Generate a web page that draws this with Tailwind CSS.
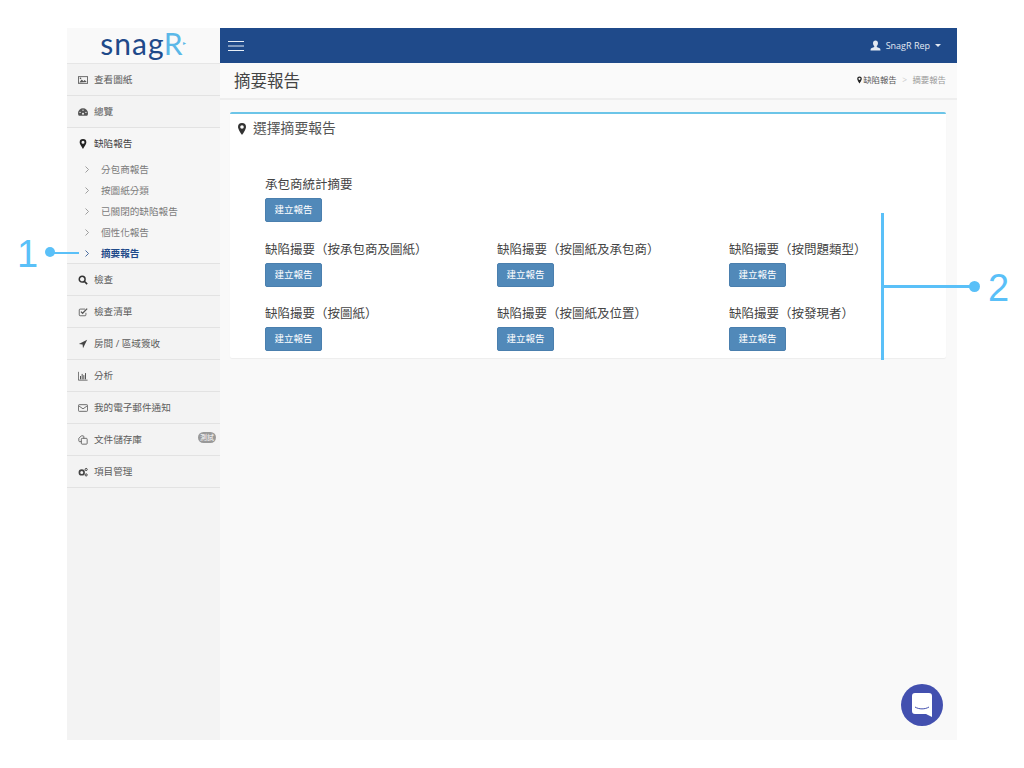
<!DOCTYPE html>
<html lang="zh-Hant">
<head>
  <meta charset="utf-8">
  <title>摘要報告</title>
  <script src="https://cdn.jsdelivr.net/npm/@tailwindcss/browser@4"></script>
</head>
<body class="bg-white h-[768px] overflow-hidden relative font-['Open_Sans','Noto_Sans_CJK_TC',sans-serif]">
  <div class="absolute left-[67px] top-[28px] w-[890px] h-[712px] flex bg-[#f9f9f9]">
    <!-- sidebar -->
    <aside class="w-[153px] shrink-0 bg-[#f3f3f3] text-[9.600px] leading-[16px] text-[#5c5c5c]">
      <div class="h-[36px] bg-[#f9f9f9] border-b border-[#e6e6e6] flex items-center justify-center">
        <span class="font-['Lato',sans-serif] text-[30px] leading-none tracking-[1.100px] text-[#1f4a8a] -mt-[6px] flex items-start">snag<span class="text-[#5bb8e8] -ml-[1px]">R</span><span class="text-[#5bb8e8] text-[6px] -ml-[1px] mt-[12px]">▸</span></span>
      </div>
      <a class="h-[32px] border-b border-[#e2e2e2] flex items-center pl-[11px] gap-[6px]">
        <svg class="w-[10px] h-[10px]" viewBox="0 0 12 12"><path fill="#555" d="M0 1.500h12v9H0z"/><path fill="#f3f3f3" d="M1 2.500h10v7H1z"/><path fill="#555" d="M1.500 9l3-3.500 2 2 1.500-1.500 2.500 2.500z"/><circle cx="3" cy="4" r="1" fill="#555"/></svg>
        <span>查看圖紙</span>
      </a>
      <a class="h-[32px] border-b border-[#e2e2e2] flex items-center pl-[11px] gap-[6px]">
        <svg class="w-[10px] h-[10px]" viewBox="0 0 12 12"><path fill="#555" d="M6 1.500a6 6 0 0 0-6 6c0 1.300.4 2.400 1 3h10c.6-.6 1-1.700 1-3a6 6 0 0 0-6-6z"/><circle cx="6" cy="8" r="1.200" fill="#f3f3f3"/><circle cx="2.500" cy="6.500" r=".8" fill="#f3f3f3"/><circle cx="9.500" cy="6.500" r=".8" fill="#f3f3f3"/><circle cx="6" cy="3.800" r=".8" fill="#f3f3f3"/></svg>
        <span>總覽</span>
      </a>
      <div class="h-[136px] border-b border-[#e2e2e2] bg-[#f6f6f6]">
        <a class="h-[32px] flex items-center pl-[11px] gap-[6px] text-[#444]">
          <svg class="w-[10px] h-[10px]" viewBox="0 0 12 12"><path fill="#222" fill-rule="evenodd" d="M6 0a4 4 0 0 0-4 4c0 2.500 4 8 4 8s4-5.500 4-8a4 4 0 0 0-4-4zm0 2.200a1.800 1.800 0 1 1 0 3.600 1.800 1.800 0 0 1 0-3.600z"/></svg>
          <span>缺陷報告</span>
        </a>
        <ul class="text-[#7c7c7c] -mt-[1px]">
          <li class="h-[21px] flex items-center pl-[18px] gap-[12px]"><svg class="w-[4px] h-[7px]" viewBox="0 0 4 7"><path d="M.5.5l3 3-3 3" fill="none" stroke="#888" stroke-width=".8"/></svg>分包商報告</li>
          <li class="h-[21px] flex items-center pl-[18px] gap-[12px]"><svg class="w-[4px] h-[7px]" viewBox="0 0 4 7"><path d="M.5.5l3 3-3 3" fill="none" stroke="#888" stroke-width=".8"/></svg>按圖紙分類</li>
          <li class="h-[21px] flex items-center pl-[18px] gap-[12px]"><svg class="w-[4px] h-[7px]" viewBox="0 0 4 7"><path d="M.5.5l3 3-3 3" fill="none" stroke="#888" stroke-width=".8"/></svg>已關閉的缺陷報告</li>
          <li class="h-[21px] flex items-center pl-[18px] gap-[12px]"><svg class="w-[4px] h-[7px]" viewBox="0 0 4 7"><path d="M.5.5l3 3-3 3" fill="none" stroke="#888" stroke-width=".8"/></svg>個性化報告</li>
          <li class="h-[21px] flex items-center pl-[18px] gap-[12px] text-[#1f4a8a] font-bold"><svg class="w-[4px] h-[7px]" viewBox="0 0 4 7"><path d="M.5.5l3 3-3 3" fill="none" stroke="#1f4a8a" stroke-width=".8"/></svg>摘要報告</li>
        </ul>
      </div>
      <a class="h-[32px] border-b border-[#e2e2e2] flex items-center pl-[11px] gap-[6px]">
        <svg class="w-[10px] h-[10px]" viewBox="0 0 12 12"><circle cx="5" cy="5" r="3.500" fill="none" stroke="#333" stroke-width="1.800"/><path d="M7.500 7.500l3.500 3.500" stroke="#333" stroke-width="2"/></svg>
        <span>檢查</span>
      </a>
      <a class="h-[32px] border-b border-[#e2e2e2] flex items-center pl-[11px] gap-[6px]">
        <svg class="w-[10px] h-[10px]" viewBox="0 0 12 12"><path d="M9.500 7v2.500a1 1 0 0 1-1 1h-6a1 1 0 0 1-1-1v-6a1 1 0 0 1 1-1h6" fill="none" stroke="#555"/><path d="M3.500 5.500l2 2 5.500-5.500" fill="none" stroke="#555" stroke-width="1.500"/></svg>
        <span>檢查清單</span>
      </a>
      <a class="h-[32px] border-b border-[#e2e2e2] flex items-center pl-[11px] gap-[6px]">
        <svg class="w-[10px] h-[10px]" viewBox="0 0 12 12"><path fill="#444" d="M11 1L1 6l4.500.5L6 11z"/></svg>
        <span>房間 / 區域簽收</span>
      </a>
      <a class="h-[32px] border-b border-[#e2e2e2] flex items-center pl-[11px] gap-[6px]">
        <svg class="w-[10px] h-[10px]" viewBox="0 0 12 12"><path d="M.5 1v10h11" fill="none" stroke="#555"/><path d="M3 10V6M5 10V3.500M7 10V5M9 10V2.500" stroke="#555" stroke-width="1.200"/></svg>
        <span>分析</span>
      </a>
      <a class="h-[32px] border-b border-[#e2e2e2] flex items-center pl-[11px] gap-[6px]">
        <svg class="w-[10px] h-[10px]" viewBox="0 0 12 12"><rect x=".5" y="2" width="11" height="8" rx="1" fill="none" stroke="#555"/><path d="M1 3.500l5 3.500 5-3.500" fill="none" stroke="#555"/></svg>
        <span>我的電子郵件通知</span>
      </a>
      <a class="relative h-[32px] border-b border-[#e2e2e2] flex items-center pl-[11px] gap-[6px]">
        <svg class="w-[10px] h-[10px]" viewBox="0 0 12 12"><rect x="4" y="4" width="7" height="7" rx="1" fill="none" stroke="#555"/><path d="M4 8H2a1 1 0 0 1-1-1V4l3-3h2a1 1 0 0 1 1 1v2" fill="none" stroke="#555"/></svg>
        <span>文件儲存庫</span>
        <span class="absolute right-[4px] top-[8px] h-[11px] w-[18px] rounded-full bg-[#999] text-white text-[7px] leading-[11px] text-center">測試</span>
      </a>
      <a class="h-[32px] border-b border-[#e2e2e2] flex items-center pl-[11px] gap-[6px]">
        <svg class="w-[10px] h-[10px]" viewBox="0 0 12 12"><circle cx="4.500" cy="6.500" r="2.800" fill="none" stroke="#444" stroke-width="2"/><circle cx="9.800" cy="3" r="1.300" fill="none" stroke="#444" stroke-width="1.200"/><circle cx="9.800" cy="9.500" r="1.300" fill="none" stroke="#444" stroke-width="1.200"/></svg>
        <span>項目管理</span>
      </a>
    </aside>

    <!-- main -->
    <div class="flex-1 flex flex-col min-w-0">
      <header class="h-[35px] shrink-0 bg-[#1f4a8a] flex items-center justify-between pl-[8px] pr-[16px]">
        <svg class="w-[16px] h-[12px]" viewBox="0 0 16 12"><path d="M0 1.500h16M0 6h16M0 10.500h16" stroke="#e8eef6" stroke-width="1.200"/></svg>
        <div class="flex items-center text-[9px] text-[#e3e9f2]">
          <svg class="w-[11px] h-[11px] mr-[5px]" viewBox="0 0 12 12"><path fill="#e3e9f2" d="M6 .5c1.700 0 2.700 1.200 2.700 3 0 1.300-.6 2.500-1.300 3.100v1c1.500.6 4 1 4 2.900v1H.6v-1c0-1.900 2.500-2.300 4-2.900v-1C3.900 6 3.300 4.800 3.300 3.500c0-1.800 1-3 2.700-3z"/></svg>
          <span>SnagR Rep</span>
          <span class="ml-[5px] w-0 h-0 border-x-[3px] border-x-transparent border-t-[3px] border-t-[#e3e9f2]"></span>
        </div>
      </header>
      <div class="h-[37px] shrink-0 bg-[#fafafa] border-b-2 border-[#eeeeee] flex items-center justify-between pl-[14px] pr-[11px]">
        <h1 class="text-[16.500px] text-[#444] font-normal mt-[2px]">摘要報告</h1>
        <div class="flex items-center text-[8.400px] text-[#555]">
          <svg class="w-[7px] h-[8px]" viewBox="0 0 12 12"><path fill="#222" fill-rule="evenodd" d="M6 0a4 4 0 0 0-4 4c0 2.500 4 8 4 8s4-5.500 4-8a4 4 0 0 0-4-4zm0 2.200a1.800 1.800 0 1 1 0 3.600 1.800 1.800 0 0 1 0-3.600z"/></svg>
          <span>缺陷報告</span>
          <span class="mx-[5.500px] text-[#ccc]">&gt;</span>
          <span class="text-[#999]">摘要報告</span>
        </div>
      </div>
      <section class="mt-[12px] ml-[10px] w-[716px] h-[246px] bg-white rounded-[2px] border-t-2 border-[#6cc5e8] shadow-[0_1px_1px_rgba(0,0,0,0.05)] text-[#444]">
        <div class="flex items-center h-[29px] pl-[7px] gap-[6px] text-[13.800px] text-[#555]">
          <svg class="w-[10px] h-[12px]" viewBox="0 0 10 12"><path fill="#333" fill-rule="evenodd" d="M5 0a4 4 0 0 0-4 4c0 2.500 4 8 4 8s4-5.500 4-8a4 4 0 0 0-4-4zm0 2.200a1.800 1.800 0 1 1 0 3.600 1.800 1.800 0 0 1 0-3.600z"/></svg>
          <span>選擇摘要報告</span>
        </div>
        <div class="pl-[35px] pt-[34px] grid grid-cols-[232px_232px_1fr] gap-y-[19.500px] text-[12.500px] leading-[16px]">
          <div class="col-span-3">
            <p>承包商統計摘要</p>
            <button class="mt-[5px] h-[24px] w-[57px] rounded-[2px] bg-[#5189b9] border border-[#4a7fae] text-white text-[9.500px]">建立報告</button>
          </div>
          <div>
            <p>缺陷撮要（按承包商及圖紙）</p>
            <button class="mt-[5px] h-[24px] w-[57px] rounded-[2px] bg-[#5189b9] border border-[#4a7fae] text-white text-[9.500px]">建立報告</button>
          </div>
          <div>
            <p>缺陷撮要（按圖紙及承包商）</p>
            <button class="mt-[5px] h-[24px] w-[57px] rounded-[2px] bg-[#5189b9] border border-[#4a7fae] text-white text-[9.500px]">建立報告</button>
          </div>
          <div>
            <p>缺陷撮要（按問題類型）</p>
            <button class="mt-[5px] h-[24px] w-[57px] rounded-[2px] bg-[#5189b9] border border-[#4a7fae] text-white text-[9.500px]">建立報告</button>
          </div>
          <div>
            <p>缺陷撮要（按圖紙）</p>
            <button class="mt-[5px] h-[24px] w-[57px] rounded-[2px] bg-[#5189b9] border border-[#4a7fae] text-white text-[9.500px]">建立報告</button>
          </div>
          <div>
            <p>缺陷撮要（按圖紙及位置）</p>
            <button class="mt-[5px] h-[24px] w-[57px] rounded-[2px] bg-[#5189b9] border border-[#4a7fae] text-white text-[9.500px]">建立報告</button>
          </div>
          <div>
            <p>缺陷撮要（按發現者）</p>
            <button class="mt-[5px] h-[24px] w-[57px] rounded-[2px] bg-[#5189b9] border border-[#4a7fae] text-white text-[9.500px]">建立報告</button>
          </div>
        </div>
      </section>
    </div>

    <!-- chat bubble -->
    <div class="absolute left-[834px] top-[656px] w-[42px] h-[42px] rounded-full bg-[#4350af] flex items-center justify-center">
      <svg class="w-[20px] h-[24px]" viewBox="0 0 20 24"><path fill="#fff" d="M3 0h14a3 3 0 0 1 3 3v21l-6-3H3a3 3 0 0 1-3-3V3a3 3 0 0 1 3-3z"/><path d="M3 14c4 2.500 10 2.500 14 0" fill="none" stroke="#4350af" stroke-width="1"/></svg>
    </div>
  </div>

  <!-- annotations -->
  <div class="absolute left-[17px] top-[233px] text-[38px] leading-[42px] text-[#5ac0f8] font-['Liberation_Sans',sans-serif]">1</div>
  <div class="absolute left-[45px] top-[247px] w-[10px] h-[10px] rounded-full bg-[#5ac0f8]"></div>
  <div class="absolute left-[50px] top-[252px] w-[29px] h-[2px] bg-[#5ac0f8]"></div>
  <div class="absolute left-[881px] top-[213px] w-[3px] h-[147px] bg-[#5ac0f8]"></div>
  <div class="absolute left-[884px] top-[285px] w-[90px] h-[3px] bg-[#5ac0f8]"></div>
  <div class="absolute left-[969px] top-[281px] w-[11px] h-[11px] rounded-full bg-[#5ac0f8]"></div>
  <div class="absolute left-[988px] top-[267px] text-[38px] leading-[42px] text-[#5ac0f8] font-['Liberation_Sans',sans-serif]">2</div>
</body>
</html>
